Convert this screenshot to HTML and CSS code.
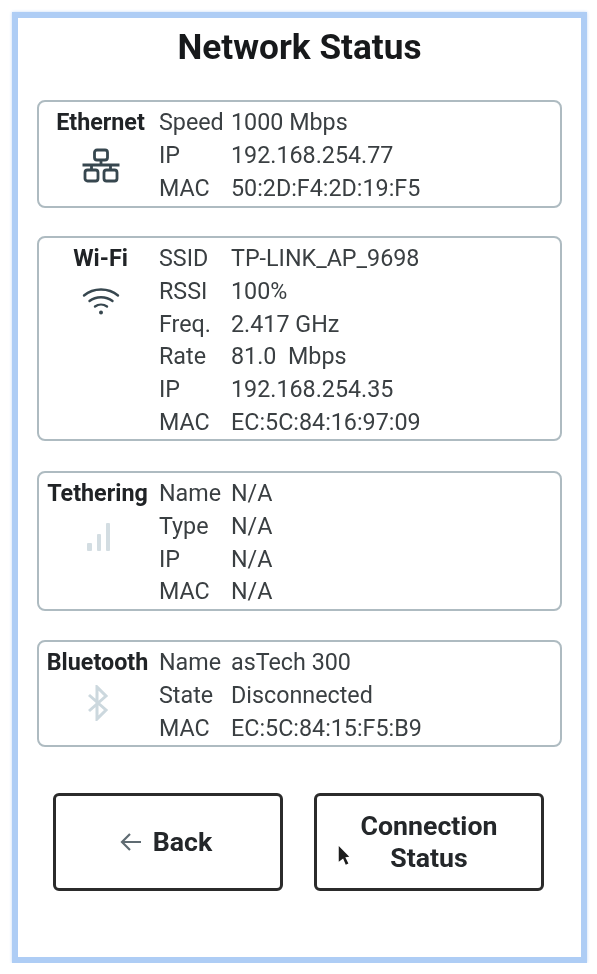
FILE: index.html
```html
<!DOCTYPE html>
<html lang="en">
<head>
    <meta charset="UTF-8">
    <meta name="viewport" content="width=device-width, initial-scale=1.0">
    <title>Network Status</title>
    <link rel="stylesheet" href="styles.css">
</head>
<body>
    <div class="frame">
        <h1>Network Status</h1>

        <section class="card card-ethernet">
            <div class="card-side">
                <h2>Ethernet</h2>
                <svg class="icon icon-ethernet" width="38" height="40" viewBox="0 0 38 40" fill="none" stroke="#37474f" stroke-width="2.800">
                    <rect x="12.500" y="2" width="13" height="10" rx="2.500"/>
                    <path d="M19 12V17M0.500 17H37.500M9.500 17V22M28.500 17V22"/>
                    <rect x="3" y="22" width="13" height="11" rx="2.500"/>
                    <rect x="22" y="22" width="13" height="11" rx="2.500"/>
                </svg>
            </div>
            <dl class="rows">
                <dt>Speed</dt><dd>1000 Mbps</dd>
                <dt>IP</dt><dd>192.168.254.77</dd>
                <dt>MAC</dt><dd>50:2D:F4:2D:19:F5</dd>
            </dl>
        </section>

        <section class="card card-wifi">
            <div class="card-side">
                <h2>Wi-Fi</h2>
                <svg class="icon icon-wifi" width="38" height="32" viewBox="0 0 38 32" fill="none" stroke="#37474f" stroke-width="2.400" stroke-linecap="round">
                    <path d="M2 9.500C11.500 1.500 26.500 1.500 36 9.500"/>
                    <path d="M7.500 15C14 10 24 10 30.500 15"/>
                    <path d="M13 20.500C16.500 18 21.500 18 25 20.500"/>
                    <circle cx="19" cy="26.500" r="2" fill="#37474f" stroke="none"/>
                </svg>
            </div>
            <dl class="rows">
                <dt>SSID</dt><dd>TP-LINK_AP_9698</dd>
                <dt>RSSI</dt><dd>100%</dd>
                <dt>Freq.</dt><dd>2.417 GHz</dd>
                <dt>Rate</dt><dd>81.0&nbsp; Mbps</dd>
                <dt>IP</dt><dd>192.168.254.35</dd>
                <dt>MAC</dt><dd>EC:5C:84:16:97:09</dd>
            </dl>
        </section>

        <section class="card card-tether">
            <div class="card-side side-wide">
                <h2>Tethering</h2>
                <svg class="icon icon-tether" width="28" height="32" viewBox="0 0 28 32" fill="#d3dde2">
                    <rect x="2" y="22" width="5" height="8" rx="1"/>
                    <rect x="12" y="13" width="4" height="17" rx="1"/>
                    <rect x="21" y="2" width="4" height="28" rx="1"/>
                </svg>
            </div>
            <dl class="rows">
                <dt>Name</dt><dd>N/A</dd>
                <dt>Type</dt><dd>N/A</dd>
                <dt>IP</dt><dd>N/A</dd>
                <dt>MAC</dt><dd>N/A</dd>
            </dl>
        </section>

        <section class="card card-bluetooth">
            <div class="card-side side-wide">
                <h2>Bluetooth</h2>
                <svg class="icon icon-bluetooth" width="24" height="36" viewBox="0 0 24 36" fill="none" stroke="#ccd8de" stroke-width="3">
                    <path d="M3 10L20 25L11 34V2L20 11L3 26"/>
                </svg>
            </div>
            <dl class="rows">
                <dt>Name</dt><dd>asTech 300</dd>
                <dt>State</dt><dd>Disconnected</dd>
                <dt>MAC</dt><dd>EC:5C:84:15:F5:B9</dd>
            </dl>
        </section>

        <div class="actions">
            <button class="action-btn back-btn">
                <svg width="24" height="24" viewBox="0 0 24 24" fill="none" stroke="#5f6b72" stroke-width="2.200">
                    <path d="M22 12H3M11 4L3 12L11 20"/>
                </svg>
                Back
            </button>
            <button class="action-btn">Connection<br>Status</button>
            <svg class="cursor" width="14" height="21" viewBox="0 0 16 24" fill="#1c1c1c">
                <path d="M2 1L14 13.500L9.500 14L13 21L10 22.500L7 15.500L2 19Z"/>
            </svg>
        </div>
    </div>
</body>
</html>
```

FILE: styles.css
```css
body {
    margin: 0;
    background-color: #ffffff;
    font-family: Roboto, "Liberation Sans", sans-serif;
    color: #3a3f42;
}
.frame {
    position: relative;
    box-sizing: border-box;
    width: 575px;
    height: 951px;
    margin: 12px 0 0 12px;
    padding: 10px 19px 0 19px;
    background-color: #ffffff;
    border: 6px solid #aecdf5;
    box-shadow: 0 0 3px #c4dbf8;
    filter: blur(0.5px);
}
h1 {
    margin: 0 0 34px 0;
    font-size: 35.200px;
    line-height: 38px;
    font-weight: 700;
    color: #17191b;
    text-align: center;
}
.card {
    display: flex;
    box-sizing: border-box;
    width: 525px;
    padding: 4px 0 0 0;
    margin-bottom: 28px;
    background-color: #ffffff;
    border: 2px solid #aebbc1;
    border-radius: 8px;
}
.card-ethernet { height: 108px; }
.card-wifi { height: 205px; margin-bottom: 30px; }
.card-tether { height: 140px; margin-bottom: 29px; }
.card-bluetooth { height: 107px; margin-bottom: 46px; }
.card-side {
    display: flex;
    flex-direction: column;
    align-items: center;
    width: 120px;
    padding-left: 3px;
    box-sizing: border-box;
}
.side-wide {
    padding-left: 0;
    padding-right: 3px;
}
.card-side h2 {
    margin: 0 0 4px 0;
    font-size: 23.300px;
    line-height: 33px;
    font-weight: 700;
    color: #202326;
    white-space: nowrap;
}
.icon-ethernet { margin-top: 5px; }
.icon-wifi { margin-top: 7px; }
.icon-tether { margin: 7px 0 0 3px; }
.icon-bluetooth { margin: 2px 0 0 1px; }
.rows {
    display: grid;
    grid-template-columns: 72px 1fr;
    grid-auto-rows: 32.800px;
    margin: 0;
    font-size: 23.300px;
    line-height: 32.800px;
}
.rows dt {
    margin: 0;
}
.rows dd {
    margin: 0;
}
.actions {
    position: relative;
    display: flex;
    gap: 31px;
    padding-left: 16px;
}
.action-btn {
    display: flex;
    align-items: center;
    justify-content: center;
    gap: 10px;
    box-sizing: border-box;
    width: 230px;
    height: 98px;
    padding: 0;
    background-color: #ffffff;
    border: 3px solid #2b2b2b;
    border-radius: 6px;
    font-family: inherit;
    font-size: 26.700px;
    line-height: 32px;
    font-weight: 700;
    color: #24272a;
}
.back-btn {
    padding-right: 5px;
}
.cursor {
    position: absolute;
    left: 300px;
    top: 52px;
}
```
